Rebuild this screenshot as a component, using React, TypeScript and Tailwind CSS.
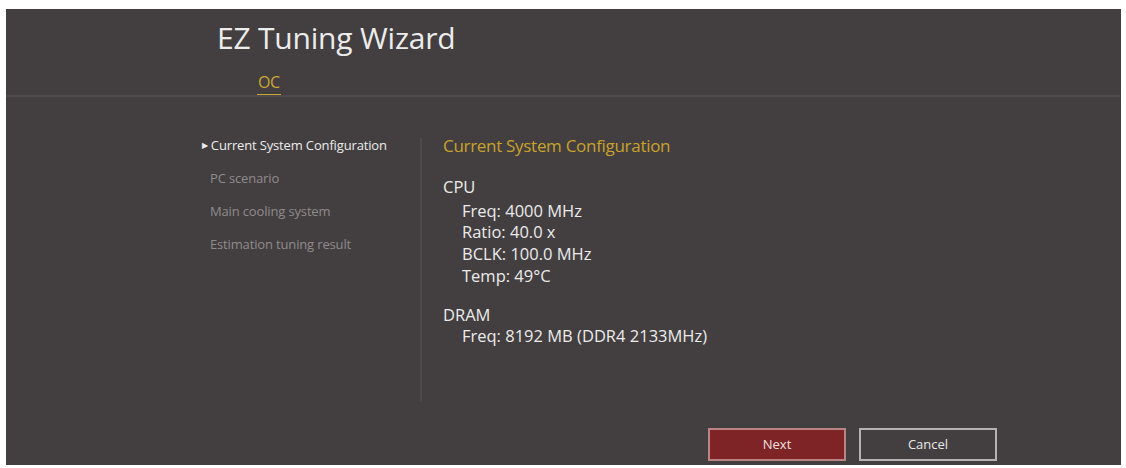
import React from 'react';

const menu = ['Current System Configuration', 'PC scenario', 'Main cooling system', 'Estimation tuning result'];

const cpu = ['Freq: 4000 MHz', 'Ratio: 40.0 x', 'BCLK: 100.0 MHz', 'Temp: 49°C'];

export default function App() {
  return (
    <div className="w-[1126px] h-[468px] bg-white overflow-hidden" style={{ fontFamily: '"Open Sans", "Noto Sans", sans-serif' }}>
      <div className="ml-[6px] mt-[9px] w-[1115px] h-[456px] bg-[#433f40] flex flex-col">
        {/* header */}
        <div className="pl-[211px] pt-[11px]">
          <h1 className="text-[30px] leading-[36px] text-[#ececec] tracking-[-0.2px]">EZ Tuning Wizard</h1>
          <div className="pl-[40px] mt-[17px] flex">
            <span className="text-[16px] leading-[18px] text-[#c9a834] border-b-2 border-[#c9a834] pb-[3px] px-[1px] tracking-[-0.5px]">OC</span>
          </div>
        </div>
        <div className="h-[2px] bg-[#4d494a] -mt-[1px]" />

        {/* body */}
        <div className="flex flex-1 pt-[39px]">
          <div className="w-[414px] pl-[196px] flex flex-col gap-[15px] pt-[0px]">
            {menu.map((m, i) => (
              <div key={m} className={`flex items-center text-[13px] leading-[18px] tracking-[-0.15px] ${i === 0 ? 'text-[#ececec]' : 'text-[#8f8b8c] pl-[8px]'}`}>
                {i === 0 && <span className="text-[8px] mr-[3px]">▶</span>}
                {m}
              </div>
            ))}
          </div>
          <div className="w-[2px] h-[263px] bg-[#4e4a4b] mt-[2px]" />
          <div className="pl-[21px] flex flex-col">
            <div className="text-[17px] leading-[20px] text-[#c9a22c] tracking-[-0.3px]">Current System Configuration</div>
            <div className="mt-[20px] text-[16.5px] leading-[21.7px] text-[#ebebeb]">
              <div className="mb-[2px]">CPU</div>
              <div className="pl-[19px]">
                {cpu.map((c) => (
                  <div key={c}>{c}</div>
                ))}
              </div>
              <div className="mt-[17px]">DRAM</div>
              <div className="pl-[19px]">Freq: 8192 MB (DDR4 2133MHz)</div>
            </div>
          </div>
        </div>

        {/* buttons */}
        <div className="flex gap-[13px] pl-[702px] pb-[4px]">
          <button className="w-[138px] h-[33px] bg-[#7e2326] border-2 border-[#b98484] text-[13px] text-[#f0e0e0]">Next</button>
          <button className="w-[138px] h-[33px] border-2 border-[#b5b3b3] text-[13px] text-[#e8e8e8]">Cancel</button>
        </div>
      </div>
    </div>
  );
}
